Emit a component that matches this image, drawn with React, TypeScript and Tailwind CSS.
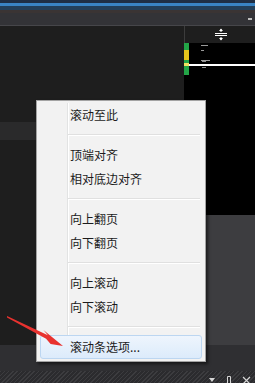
import React from "react";

const font = { fontFamily: '"Noto Sans CJK SC", "Noto Sans", sans-serif' };

function Item({ label, active }: { label: string; active?: boolean }) {
  return (
    <div
      className={
        active
          ? "relative h-[24px] mx-[1px] flex items-center pl-[29px] rounded-[3px] border border-[#bcd6f1] bg-[linear-gradient(#eef5fd,#dcebfb)]"
          : "relative h-[24px] flex items-center pl-[31px]"
      }
    >
      <span className="text-[12px] leading-none text-[#1b1b1b]" style={font}>
        {label}
      </span>
    </div>
  );
}

function Sep() {
  return (
    <div className="relative h-[16px] flex flex-col justify-center ml-[29px] mr-[3px]">
      <div className="h-px bg-[#e0e0e0]" />
      <div className="h-px bg-white" />
    </div>
  );
}

export default function App() {
  return (
    <div className="relative w-[255px] h-[383px] overflow-hidden flex flex-col bg-[#1e1e1e]">
      {/* top bars */}
      <div className="h-[3px] bg-[#1f2f45]" />
      <div className="h-[3px] bg-[#3a84c4]" />
      <div className="h-[4px] bg-[#24405a]" />
      <div className="h-[3px] bg-[#3a3434]" />
      <div className="h-[12px] bg-[#333337] flex items-center justify-end pr-[3px]">
        <div className="w-[4px] h-[2px] bg-[#bdbdbd]" />
      </div>
      <div className="h-px bg-[#46464a]" />

      {/* main */}
      <div className="flex-1 flex">
        <div className="w-[184px] flex flex-col">
          <div className="h-[96px] bg-[#1e1e1e]" />
          <div className="h-[18px] bg-[#2a2a2b]" />
          <div className="flex-1 bg-[#1e1e1e]" />
        </div>
        <div className="flex-1 flex flex-col">
          <div className="h-[17px] border-l border-[#3c3c3c] flex items-center justify-center pl-[2px]">
            <svg width="14" height="13" viewBox="0 0 14 13">
              <line x1="1" y1="5.5" x2="13" y2="5.5" stroke="#fff" strokeWidth="1" />
              <line x1="1" y1="7.5" x2="13" y2="7.5" stroke="#fff" strokeWidth="1" />
              <line x1="7" y1="1" x2="7" y2="4" stroke="#fff" strokeWidth="1" />
              <path d="M5 3 L7 0.5 L9 3 Z" fill="#fff" />
              <line x1="7" y1="9" x2="7" y2="12" stroke="#fff" strokeWidth="1" />
              <path d="M5 10 L7 12.5 L9 10 Z" fill="#fff" />
            </svg>
          </div>
          <div className="h-[172px] bg-black flex">
            <div className="w-[5px] flex flex-col">
              <div className="h-[7px] bg-[#23a547]" />
              <div className="h-[10px] bg-[#e5c41c]" />
              <div className="h-[3px] bg-[#23a547]" />
              <div className="h-[3px] bg-[#f0e060]" />
              <div className="h-[9px] bg-[#23a547]" />
            </div>
            <div className="flex-1 flex flex-col">
              <svg width="66" height="32" viewBox="0 0 66 32">
                <rect x="12" y="2" width="7" height="1" fill="#9a9a9a" />
                <rect x="12" y="7" width="3" height="1" fill="#9a9a9a" />
                <rect x="12" y="17" width="9" height="1" fill="#9a9a9a" />
                <rect x="13" y="18" width="4" height="1" fill="#8a8a8a" />
                <rect x="0" y="21" width="66" height="2" fill="#ffffff" />
                <rect x="13" y="24" width="4" height="1" fill="#8a8a8a" />
              </svg>
            </div>
          </div>
          <div className="flex-1 bg-[#3d3d40]" />
        </div>
      </div>

      {/* bottom */}
      <div className="h-[26px] bg-[#2f2f32]" />
      <div className="h-[12px] bg-[repeating-linear-gradient(135deg,#3c3c3f_0px,#3c3c3f_1px,#2b2b2e_1px,#2b2b2e_3px)] flex items-start justify-end pr-[4px] gap-[10px] pt-[5px]">
        <svg width="8" height="7" viewBox="0 0 8 7">
          <path d="M1 2 L7 2 L4 6 Z" fill="#d6d6d6" />
        </svg>
        <svg width="6" height="7" viewBox="0 0 6 7">
          <path d="M1.5 0.5 V7 M1.5 0.5 H4.5 V7" stroke="#d6d6d6" strokeWidth="1" fill="none" />
        </svg>
        <svg width="9" height="7" viewBox="0 0 9 7">
          <path d="M1 1 L8 8 M8 1 L1 8" stroke="#d6d6d6" strokeWidth="1.2" />
        </svg>
      </div>

      {/* context menu */}
      <div className="absolute left-[36px] top-[100px] w-[170px] border border-[#a3a3a3] bg-[#f2f2f2] p-[2px] shadow-[2px_2px_3px_rgba(0,0,0,0.55)]">
        <div className="absolute left-[30px] top-[2px] bottom-[2px] w-[2px] flex">
          <div className="w-px bg-[#e2e3e3]" />
          <div className="w-px bg-white" />
        </div>
        <Item label="滚动至此" />
        <Sep />
        <Item label="顶端对齐" />
        <Item label="相对底边对齐" />
        <Sep />
        <Item label="向上翻页" />
        <Item label="向下翻页" />
        <Sep />
        <Item label="向上滚动" />
        <Item label="向下滚动" />
        <Sep />
        <Item label="滚动条选项..." active />
      </div>

      {/* red arrow annotation */}
      <svg className="absolute left-0 top-0 pointer-events-none" width="255" height="383" viewBox="0 0 255 383">
        <polygon
          points="7,316 47.9,335.2 43.4,329.9 63,346 50.6,344.1 46.1,338.8 7,317.6"
          fill="#e8322f"
        />
      </svg>
    </div>
  );
}
